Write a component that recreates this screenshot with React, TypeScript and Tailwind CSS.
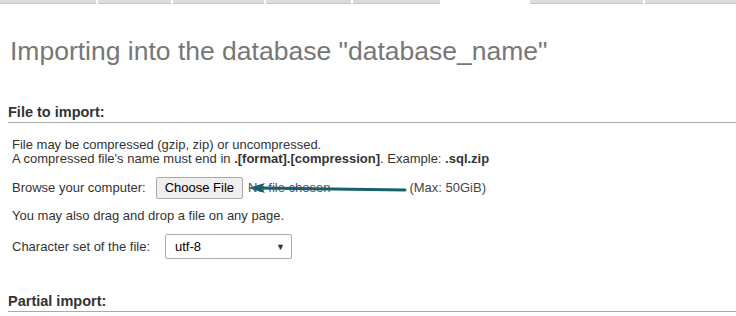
const tabs = [
  { w: "w-[96px]", active: false },
  { w: "w-[73px]", active: false },
  { w: "w-[91px]", active: false },
  { w: "w-[85px]", active: false },
  { w: "w-[87px]", active: false },
  { w: "w-[86px]", active: true },
  { w: "w-[113px]", active: false },
  { w: "flex-1", active: false },
];

function Arrow() {
  return (
    <svg className="absolute left-[244px] top-[180px]" width="166" height="16" viewBox="0 0 166 16">
      <path d="M161 10 L16 8" stroke="#17606e" strokeWidth="3" strokeLinecap="round" fill="none" />
      <path d="M4 8 L21 3 L17 8 L21 13 Z" fill="#17606e" />
    </svg>
  );
}

export default function App() {
  return (
    <div className="relative w-[736px] h-[316px] overflow-hidden bg-white font-['Liberation_Sans',Arial,sans-serif] text-[#333]">
      <div className="flex gap-[2px] h-[4px]">
        {tabs.map((t, i) => (
          <div
            key={i}
            className={`${t.w} ${t.active ? "bg-white" : "bg-[#dcdcdc] border-b border-[#c8c8c8]"}`}
          />
        ))}
      </div>

      <h2 className="mt-[30px] ml-[10px] text-[26.5px] leading-[34px] text-[#777]">
        Importing into the database "database_name"
      </h2>

      <div className="mt-[36px] ml-[8px]">
        <h3 className="text-[14.5px] font-bold leading-[17px] text-[#333] pb-[1px] border-b border-[#aaa]">
          File to import:
        </h3>

        <div className="pl-[4px] text-[13px] leading-[14px]">
          <p className="mt-[15px]">File may be compressed (gzip, zip) or uncompressed.</p>
          <p>
            A compressed file's name must end in <b>.[format].[compression]</b>. Example: <b>.sql.zip</b>
          </p>

          <div className="mt-[11px] flex items-center h-[22px]">
            <span>Browse your computer:</span>
            <span className="ml-[10px] h-[22px] px-[8px] flex items-center border border-[#a9a9a9] rounded-[2px] bg-[#efefef] text-[13px] text-black">
              Choose File
            </span>
            <span className="ml-[5px] text-[13px] text-[#555]">No file chosen</span>
            <span className="ml-[79px] text-[#444]">(Max: 50GiB)</span>
          </div>

          <p className="mt-[10px]">You may also drag and drop a file on any page.</p>

          <div className="mt-[11px] flex items-center h-[25px]">
            <span>Character set of the file:</span>
            <span className="ml-[15px] w-[127px] h-[25px] pl-[9px] pr-[6px] flex items-center justify-between border border-[#aaa] rounded-[2px] bg-white text-[13px] text-black">
              utf-8
              <span className="text-[9px] text-[#333]">▼</span>
            </span>
          </div>
        </div>

        <h3 className="mt-[34px] text-[14.5px] font-bold leading-[17px] text-[#333] pb-[1px] border-b border-[#aaa]">
          Partial import:
        </h3>
      </div>

      <Arrow />
    </div>
  );
}
